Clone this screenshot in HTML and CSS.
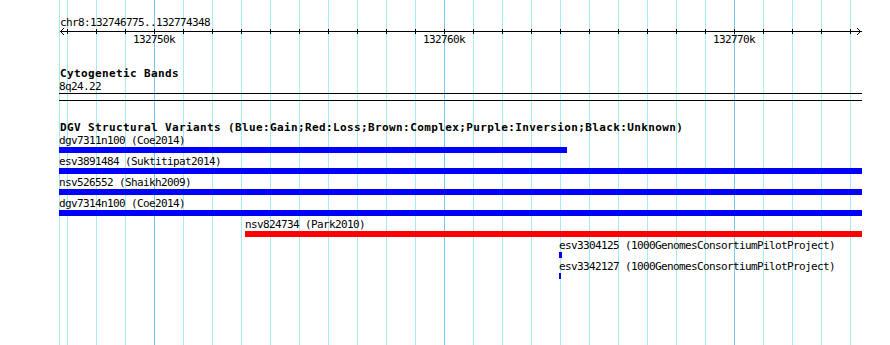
FILE: index.html
```html
<!DOCTYPE html>
<html lang="en">
<head>
    <meta charset="UTF-8">
    <meta name="viewport" content="width=device-width, initial-scale=1.0">
    <title>chr8:132746775..132774348</title>
    <link rel="stylesheet" href="styles.css">
</head>
<body>
    <div class="panel">
        <div class="ruler">
            <div class="ruler-title">chr8:132746775..132774348</div>
            <svg class="axis" width="890" height="9" viewBox="0 0 890 9">
                <path class="axis-line" d="M60 4.5H862"/>
                <path class="axis-line" d="M64 1L60.5 4.5L64 8"/>
                <path class="axis-line" d="M857 1L860.5 4.5L857 8"/>
                <path class="axis-line" d="M67.5 2V7M96.5 2V7M125.5 2V7M154.5 2V7M183.5 2V7M212.5 2V7M241.5 2V7M270.5 2V7M299.5 2V7M328.5 2V7M357.5 2V7M386.5 2V7M415.5 2V7M444.5 2V7M473.5 2V7M502.5 2V7M531.5 2V7M560.5 2V7M589.5 2V7M618.5 2V7M647.5 2V7M676.5 2V7M705.5 2V7M734.5 2V7M763.5 2V7M792.5 2V7M821.5 2V7M850.5 2V7"/>
            </svg>
            <div class="ruler-labels">
                <span class="tick-label" style="left:133px">132750k</span>
                <span class="tick-label" style="left:423px">132760k</span>
                <span class="tick-label" style="left:713px">132770k</span>
            </div>
        </div>

        <div class="track cytobands">
            <div class="track-title">Cytogenetic Bands</div>
            <div class="feature-label" style="margin-left:59px">8q24.22</div>
            <div class="band" style="margin-left:59px;width:803px"></div>
        </div>

        <div class="track dgv">
            <div class="track-title">DGV Structural Variants (Blue:Gain;Red:Loss;Brown:Complex;Purple:Inversion;Black:Unknown)</div>
            <div class="feature">
                <div class="feature-label" style="margin-left:59px">dgv7311n100 (Coe2014)</div>
                <div class="bar gain" style="margin-left:59px;width:508px"></div>
            </div>
            <div class="feature">
                <div class="feature-label" style="margin-left:59px">esv3891484 (Suktitipat2014)</div>
                <div class="bar gain" style="margin-left:59px;width:803px"></div>
            </div>
            <div class="feature">
                <div class="feature-label" style="margin-left:59px">nsv526552 (Shaikh2009)</div>
                <div class="bar gain" style="margin-left:59px;width:803px"></div>
            </div>
            <div class="feature">
                <div class="feature-label" style="margin-left:59px">dgv7314n100 (Coe2014)</div>
                <div class="bar gain" style="margin-left:59px;width:803px"></div>
            </div>
            <div class="feature">
                <div class="feature-label" style="margin-left:245px">nsv824734 (Park2010)</div>
                <div class="bar loss" style="margin-left:245px;width:617px"></div>
            </div>
            <div class="feature">
                <div class="feature-label" style="margin-left:559px">esv3304125 (1000GenomesConsortiumPilotProject)</div>
                <div class="bar gain" style="margin-left:559px;width:3px"></div>
            </div>
            <div class="feature">
                <div class="feature-label" style="margin-left:559px">esv3342127 (1000GenomesConsortiumPilotProject)</div>
                <div class="bar gain" style="margin-left:559px;width:2px"></div>
            </div>
        </div>
    </div>
</body>
</html>
```

FILE: styles.css
```css
body {
    margin: 0;
    background-color: #fff;
    color: #000;
    font-family: "DejaVu Sans Mono", "Liberation Mono", monospace;
    font-size: 11px;
    line-height: 13px;
    letter-spacing: -0.62px;
}

/* grid: major lines every 10k, minor every 1k, plus the left edge */
.panel {
    width: 890px;
    height: 345px;
    overflow: hidden;
    white-space: nowrap;
    background-image:
        repeating-linear-gradient(to right, #74c8ee 0 1px, transparent 1px 290px),
        repeating-linear-gradient(to right, #a6ecf0 0 1px, transparent 1px 29px),
        linear-gradient(#a6ecf0, #a6ecf0);
    background-size: 581px 100%, 784px 100%, 1px 100%;
    background-position: 154px 0, 67px 0, 59px 0;
    background-repeat: no-repeat;
}

.ruler-title {
    padding: 16px 0 0 60px;
}

.axis {
    display: block;
    margin-top: -2px;
}

.axis-line {
    fill: none;
    stroke: #000;
    stroke-width: 1;
    shape-rendering: crispEdges;
}

.ruler-labels {
    position: relative;
    height: 13px;
    margin-top: -3px;
}

.tick-label {
    position: absolute;
    top: 0;
}

.cytobands {
    margin-top: 21px;
}

.dgv {
    margin-top: 20px;
}

.track-title {
    padding-left: 60px;
    font-weight: bold;
    letter-spacing: 0.38px;
}

.feature-label {
    height: 13px;
}

.band {
    height: 8px;
    box-sizing: border-box;
    border-top: 1px solid #000;
    border-bottom: 1px solid #000;
}

.feature {
    margin-bottom: 2px;
}

.bar {
    height: 6px;
}

.gain {
    background-color: #0000ff;
}

.loss {
    background-color: #ff0000;
}
```
